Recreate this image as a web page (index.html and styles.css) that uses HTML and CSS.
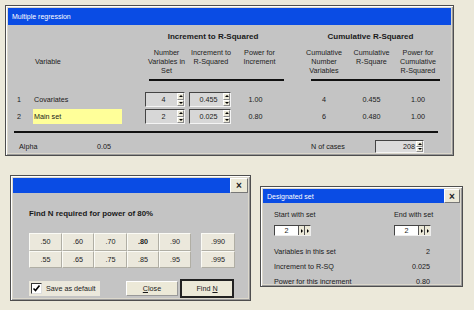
FILE: index.html
```html
<!DOCTYPE html>
<html>
<head>
    <title>Multiple regression</title>
    <link rel="stylesheet" href="styles.css">
</head>
<body>
    <div class="win" id="regression">
        <div class="titlebar">Multiple regression</div>
        <div class="win-body reg-body">
            <div class="cols group-heads">
                <div class="group inc">Increment to R-Squared</div>
                <div class="group cum">Cumulative R-Squared</div>
            </div>
            <div class="cols col-heads">
                <div class="head-var">Variable</div>
                <div class="c3">Number<br>Variables in<br>Set</div>
                <div class="c4">Increment to<br>R-Squared</div>
                <div class="c5">Power for<br>Increment</div>
                <div class="c7">Cumulative<br>Number<br>Variables</div>
                <div class="c8">Cumulative<br>R-Square</div>
                <div class="c9">Power for<br>Cumulative<br>R-Squared</div>
            </div>
            <div class="cols rules">
                <div class="rule rule-inc"></div>
                <div class="rule rule-cum"></div>
            </div>
            <div class="cols data-row">
                <div class="idx">1</div>
                <div class="name">Covariates</div>
                <div class="spin spin-n"><span class="val">4</span><span class="updown"><i class="up"></i><i class="down"></i></span></div>
                <div class="spin spin-r"><span class="val">0.455</span><span class="updown"><i class="up"></i><i class="down"></i></span></div>
                <div class="num c5">1.00</div>
                <div class="num c7">4</div>
                <div class="num c8">0.455</div>
                <div class="num c9">1.00</div>
            </div>
            <div class="cols data-row">
                <div class="idx">2</div>
                <div class="name"><span class="name-edit">Main set</span></div>
                <div class="spin spin-n"><span class="val">2</span><span class="updown"><i class="up"></i><i class="down"></i></span></div>
                <div class="spin spin-r"><span class="val">0.025</span><span class="updown"><i class="up"></i><i class="down"></i></span></div>
                <div class="num c5">0.80</div>
                <div class="num c7">6</div>
                <div class="num c8">0.480</div>
                <div class="num c9">1.00</div>
            </div>
            <div class="rule rule-full"></div>
            <div class="footer-row">
                <span class="alpha-label">Alpha</span>
                <span class="alpha-val">0.05</span>
                <span class="cases-label">N of cases</span>
                <span class="spin spin-cases"><span class="val">208</span><span class="updown"><i class="up"></i><i class="down"></i></span></span>
            </div>
        </div>
    </div>

    <div class="win" id="findn">
        <div class="titlebar"><span class="title-fill"></span><span class="close">×</span></div>
        <div class="win-body findn-body">
            <div class="findn-head">Find N required for power of 80%</div>
            <div class="power-grid">
                <button class="pbtn">.50</button>
                <button class="pbtn">.60</button>
                <button class="pbtn">.70</button>
                <button class="pbtn current">.80</button>
                <button class="pbtn">.90</button>
                <span></span>
                <button class="pbtn">.990</button>
                <button class="pbtn">.55</button>
                <button class="pbtn">.65</button>
                <button class="pbtn">.75</button>
                <button class="pbtn">.85</button>
                <button class="pbtn">.95</button>
                <span></span>
                <button class="pbtn">.995</button>
            </div>
            <div class="findn-actions">
                <label class="check"><span class="box">
                    <svg width="9" height="9" viewBox="0 0 9 9"><path d="M1.5 4.5 L3.5 6.5 L7.5 1.5" fill="none" stroke="#000" stroke-width="1.6"/></svg>
                </span>Save as default</label>
                <button class="dbtn close-btn"><u>C</u>lose</button>
                <button class="dbtn default-btn">Find <u>N</u></button>
            </div>
        </div>
    </div>

    <div class="win" id="designated">
        <div class="titlebar"><span class="title-fill">Designated set</span><span class="close">×</span></div>
        <div class="win-body des-body">
            <div class="des-pair">
                <span>Start with set</span>
                <span>End with set</span>
            </div>
            <div class="des-pair des-spins">
                <span class="hspin"><span class="val">2</span><i class="arr"></i><i class="arr"></i></span>
                <span class="hspin"><span class="val">2</span><i class="arr"></i><i class="arr"></i></span>
            </div>
            <div class="des-info">
                <div class="info-row"><span>Variables in this set</span><span>2</span></div>
                <div class="info-row"><span>Increment to R-SQ</span><span>0.025</span></div>
                <div class="info-row"><span>Power for this increment</span><span>0.80</span></div>
            </div>
        </div>
    </div>
</body>
</html>
```

FILE: styles.css
```css
/* desktop with three classic dialogs */
body {
    margin: 0;
    width: 474px;
    height: 310px;
    position: relative;
    overflow: hidden;
    background-color: #ece9da;
    font-family: "Liberation Sans", Arial, sans-serif;
    font-size: 7.2px;
    color: #1a1a1a;
}

.win {
    position: absolute;
    padding: 2px;
    background-color: #dcd8cc;
    border: 1px solid #4e4e4e;
    box-shadow: inset 1px 1px 0 #fff, inset -1px -1px 0 #9a9a9a;
}

#regression {
    left: 5px;
    top: 5px;
    width: 443px;
}

#findn {
    left: 10px;
    top: 175px;
    width: 235px;
}

#designated {
    left: 260px;
    top: 186px;
    width: 197px;
}

.titlebar {
    display: flex;
    align-items: center;
    height: 17px;
    padding-left: 4px;
    background-color: #0a4ce4;
    color: #fff;
    font-size: 7px;
}

#findn .titlebar,
#designated .titlebar {
    padding-left: 0;
}

#findn .titlebar { height: 15px; }
#designated .titlebar { height: 14px; }

.title-fill {
    flex: 1;
    padding-left: 4px;
}

.close {
    width: 16px;
    height: 100%;
    box-sizing: border-box;
    display: flex;
    align-items: center;
    justify-content: center;
    background-color: #ece9d8;
    color: #222;
    font-weight: bold;
    font-size: 10px;
    border: 1px solid;
    border-color: #fff #777 #777 #fff;
}

#findn .close { width: 18px; }

.win-body {
    background-color: #c4c4c4;
}

/* main regression window */
.reg-body {
    height: 128px;
    padding-top: 7px;
    box-sizing: border-box;
}

.cols {
    display: grid;
    grid-template-columns: 24px 110px 45px 48px 49px 15px 50px 45px 48px;
}

.group-heads {
    height: 10px;
    line-height: 10px;
    font-weight: bold;
    font-size: 8px;
    text-align: center;
}

.group.inc { grid-column: 3 / 6; }
.group.cum { grid-column: 7 / 10; }

.col-heads {
    margin-top: 6px;
    line-height: 9px;
    text-align: center;
    color: #222;
}

.head-var {
    grid-column: 2;
    align-self: center;
    text-align: left;
    padding-left: 3px;
}

.c3 { grid-column: 3; padding-left: 4px; }
.c4 { grid-column: 4; }
.c5 { grid-column: 5; }
.c7 { grid-column: 7; }
.c8 { grid-column: 8; }
.c9 { grid-column: 9; }

.rules {
    margin-top: 4px;
    height: 2px;
}

.rule {
    height: 2px;
    background-color: #111;
}

.rule-inc {
    grid-column: 3 / 6;
    margin-left: 7px;
}

.rule-cum {
    grid-column: 7 / 10;
    margin-left: 12px;
    margin-right: 2px;
}

.rule-full {
    margin: 6px 13px 0 6px;
}

.data-row {
    height: 17px;
    align-items: center;
}

.rules + .data-row { margin-top: 10px; }

.idx { padding-left: 9px; }

.name { padding-left: 2px; }

.name-edit {
    display: block;
    width: 88px;
    height: 15px;
    line-height: 15px;
    margin-left: -1px;
    padding-left: 1px;
    background-color: #ffff99;
}

.num { text-align: center; }
.num.c5 { padding-right: 8px; }

.spin {
    display: flex;
    height: 15px;
    box-sizing: border-box;
    background-color: #d7d7d7;
    border: 1px solid;
    border-color: #444 #f4f4f4 #f4f4f4 #444;
}

.spin-n { width: 40px; margin-left: 3px; }
.spin-r { width: 42px; margin-left: 2px; }

.spin .val {
    flex: 1;
    text-align: center;
    line-height: 13px;
    padding-left: 4px;
}

.updown {
    display: flex;
    flex-direction: column;
    width: 7px;
}

.updown i {
    flex: 1;
    display: flex;
    align-items: center;
    justify-content: center;
    background-color: #ece9d8;
    border: 1px solid;
    border-color: #fff #888 #888 #fff;
}

.updown .up::after {
    content: "";
    border-left: 2px solid transparent;
    border-right: 2px solid transparent;
    border-bottom: 2px solid #000;
}

.updown .down::after {
    content: "";
    border-left: 2px solid transparent;
    border-right: 2px solid transparent;
    border-top: 2px solid #000;
}

.footer-row {
    display: flex;
    align-items: center;
    height: 13px;
    margin-top: 7px;
    padding-left: 11px;
}

.alpha-label { width: 78px; }
.alpha-val { width: 214px; }
.cases-label { width: 64px; }

.spin-cases {
    width: 49px;
    height: 13px;
    background-color: #dcdcdc;
}

.spin-cases .val {
    text-align: right;
    line-height: 11px;
    padding-right: 1px;
}

/* find N dialog */
.findn-body {
    height: 105px;
    padding-left: 16px;
    padding-top: 16px;
    box-sizing: border-box;
}

.findn-head {
    font-weight: bold;
    font-size: 7.9px;
    line-height: 10px;
}

.power-grid {
    display: grid;
    grid-template-columns: 33px 32px 33px 32px 32px 10px 34px;
    grid-auto-rows: 17.5px;
    margin-top: 14px;
}

button {
    font-family: inherit;
    font-size: 7.2px;
    color: #1a1a1a;
    padding: 0;
    margin: 0;
}

.pbtn {
    background-color: #ebe8dc;
    border: 1px solid;
    border-color: #fbfbf6 #b0aea4 #b0aea4 #fbfbf6;
}

.pbtn.current { font-weight: bold; }

.findn-actions {
    display: flex;
    align-items: center;
    height: 19px;
    margin-top: 11px;
}

.check {
    display: flex;
    align-items: center;
    width: 71px;
    height: 15px;
    background-color: #ebe8dc;
}

.check .box {
    display: flex;
    align-items: center;
    justify-content: center;
    width: 9px;
    height: 9px;
    margin: 0 4px 0 2px;
    background-color: #fff;
    border: 1px solid;
    border-color: #333 #ddd #ddd #333;
}

.dbtn {
    height: 15px;
    background-color: #ece9d8;
    border: 1px solid;
    border-color: #fff #999 #999 #fff;
}

.close-btn {
    width: 52px;
    margin-left: 26px;
}

.default-btn {
    width: 54px;
    height: 19px;
    margin-left: 2px;
    border: 2px solid #222;
}

/* designated set dialog */
.des-body {
    height: 81px;
    overflow: hidden;
    padding-left: 11px;
    padding-top: 7px;
    box-sizing: border-box;
}

.des-pair {
    display: grid;
    grid-template-columns: 120px auto;
    line-height: 10px;
    white-space: nowrap;
}

.des-spins {
    margin-top: 5px;
}

.hspin {
    display: flex;
    width: 37px;
    height: 11px;
    box-sizing: border-box;
    background-color: #fff;
    border: 1px solid;
    border-color: #444 #eee #eee #444;
}

.hspin .val {
    flex: 1;
    text-align: center;
    line-height: 9px;
}

.hspin .arr {
    width: 5px;
    display: flex;
    align-items: center;
    justify-content: center;
    background-color: #ece9d8;
    border-left: 1px solid #555;
}

.hspin .arr::after {
    content: "";
    border-top: 2px solid transparent;
    border-bottom: 2px solid transparent;
    border-left: 2px solid #000;
}

.des-info {
    margin-top: 8px;
    padding-right: 30px;
}

.info-row {
    display: flex;
    justify-content: space-between;
    line-height: 15px;
}
```
